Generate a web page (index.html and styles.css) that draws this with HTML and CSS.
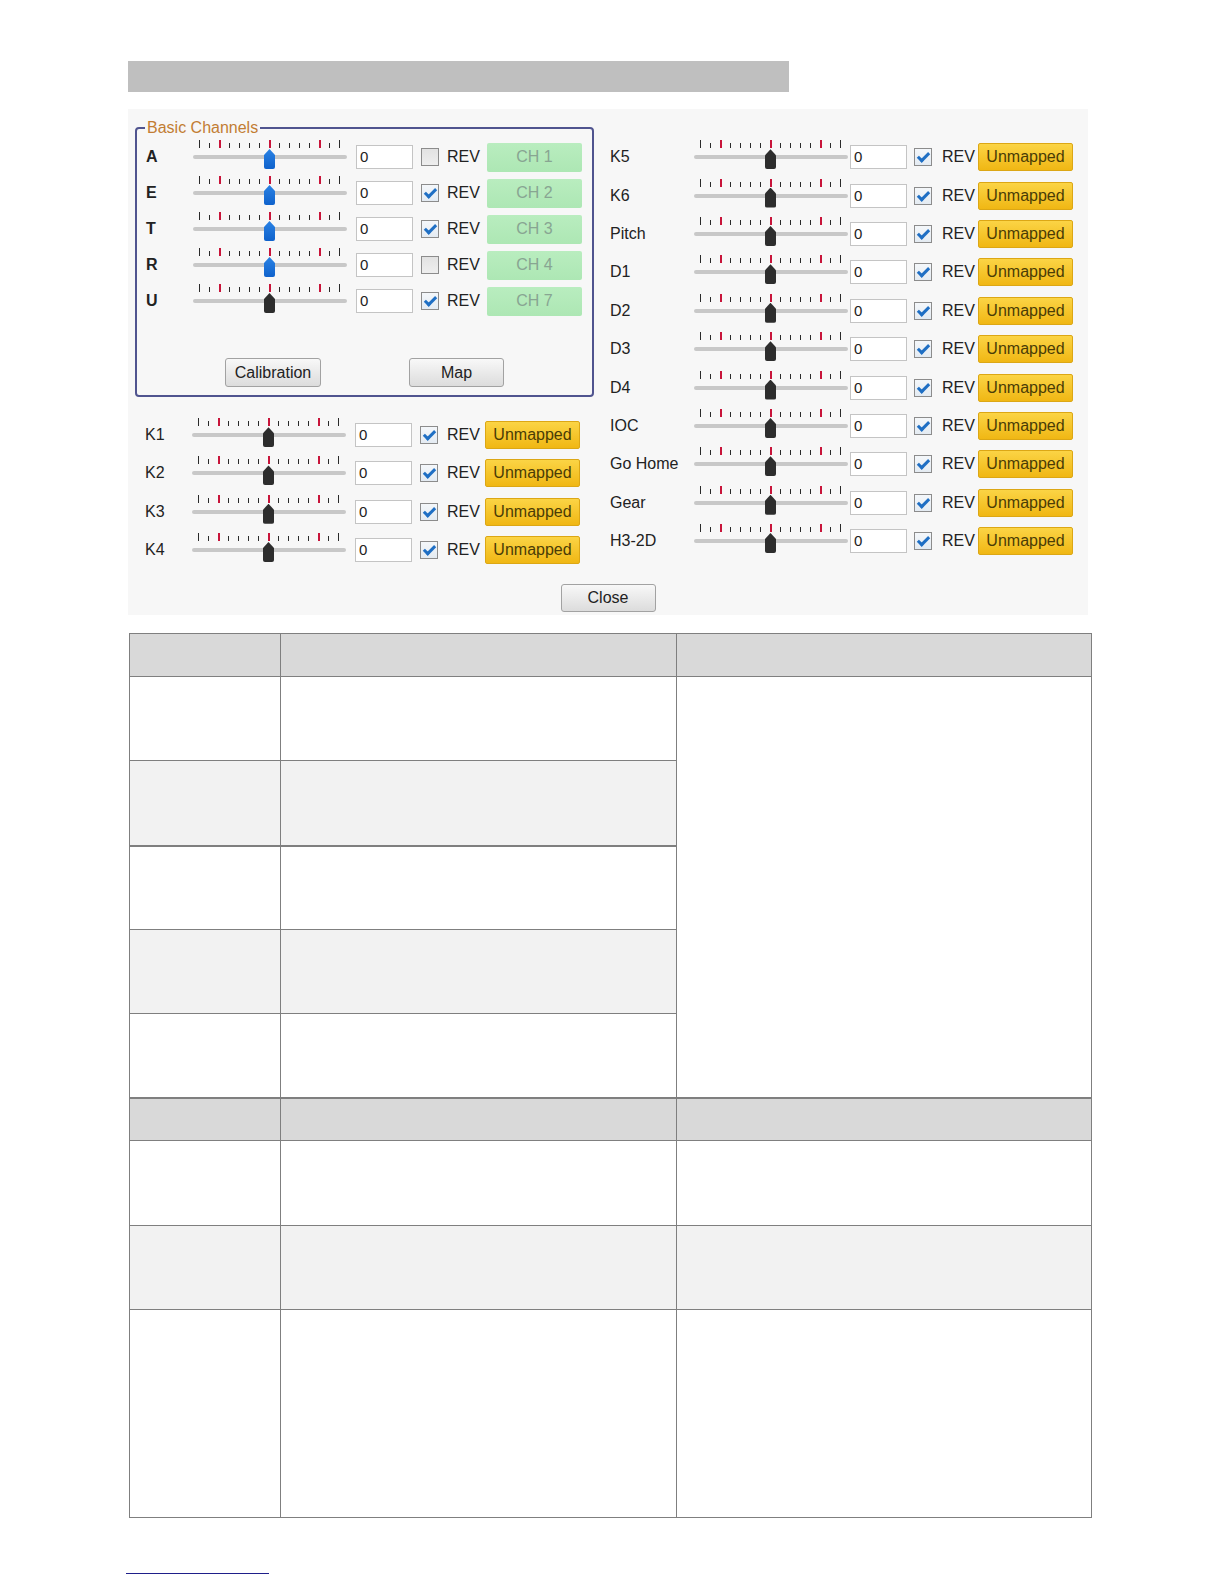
FILE: index.html
```html
<!DOCTYPE html>
<html>
<head>
<meta charset="utf-8">
<title>Channels</title>
<link rel="stylesheet" href="styles.css">
</head>
<body>
<div class="page">
  <div class="titlebar"></div>
  <div class="panel">
    <div class="cols">
      <div class="lcol">
        <fieldset class="grp">
          <legend>Basic Channels</legend>
          <div class="row g"><span class="lbl bold">A</span><div class="sl blue"><i></i></div><span class="num">0</span><span class="cb"></span><span class="rev">REV</span><span class="ch">CH 1</span></div>
          <div class="row g"><span class="lbl bold">E</span><div class="sl blue"><i></i></div><span class="num">0</span><span class="cb on"></span><span class="rev">REV</span><span class="ch">CH 2</span></div>
          <div class="row g"><span class="lbl bold">T</span><div class="sl blue"><i></i></div><span class="num">0</span><span class="cb on"></span><span class="rev">REV</span><span class="ch">CH 3</span></div>
          <div class="row g"><span class="lbl bold">R</span><div class="sl blue"><i></i></div><span class="num">0</span><span class="cb"></span><span class="rev">REV</span><span class="ch">CH 4</span></div>
          <div class="row g"><span class="lbl bold">U</span><div class="sl"><i></i></div><span class="num">0</span><span class="cb on"></span><span class="rev">REV</span><span class="ch">CH 7</span></div>
          <div class="grpbtns"><span class="btn cal">Calibration</span><span class="btn">Map</span></div>
        </fieldset>
        <div class="krows">
          <div class="row k"><span class="lbl">K1</span><div class="sl"><i></i></div><span class="num">0</span><span class="cb on"></span><span class="rev">REV</span><span class="um">Unmapped</span></div>
          <div class="row k"><span class="lbl">K2</span><div class="sl"><i></i></div><span class="num">0</span><span class="cb on"></span><span class="rev">REV</span><span class="um">Unmapped</span></div>
          <div class="row k"><span class="lbl">K3</span><div class="sl"><i></i></div><span class="num">0</span><span class="cb on"></span><span class="rev">REV</span><span class="um">Unmapped</span></div>
          <div class="row k"><span class="lbl">K4</span><div class="sl"><i></i></div><span class="num">0</span><span class="cb on"></span><span class="rev">REV</span><span class="um">Unmapped</span></div>
        </div>
      </div>
      <div class="rcol">
        <div class="row r"><span class="lbl">K5</span><div class="sl"><i></i></div><span class="num">0</span><span class="cb on"></span><span class="rev">REV</span><span class="um">Unmapped</span></div>
        <div class="row r"><span class="lbl">K6</span><div class="sl"><i></i></div><span class="num">0</span><span class="cb on"></span><span class="rev">REV</span><span class="um">Unmapped</span></div>
        <div class="row r"><span class="lbl">Pitch</span><div class="sl"><i></i></div><span class="num">0</span><span class="cb on"></span><span class="rev">REV</span><span class="um">Unmapped</span></div>
        <div class="row r"><span class="lbl">D1</span><div class="sl"><i></i></div><span class="num">0</span><span class="cb on"></span><span class="rev">REV</span><span class="um">Unmapped</span></div>
        <div class="row r"><span class="lbl">D2</span><div class="sl"><i></i></div><span class="num">0</span><span class="cb on"></span><span class="rev">REV</span><span class="um">Unmapped</span></div>
        <div class="row r"><span class="lbl">D3</span><div class="sl"><i></i></div><span class="num">0</span><span class="cb on"></span><span class="rev">REV</span><span class="um">Unmapped</span></div>
        <div class="row r"><span class="lbl">D4</span><div class="sl"><i></i></div><span class="num">0</span><span class="cb on"></span><span class="rev">REV</span><span class="um">Unmapped</span></div>
        <div class="row r"><span class="lbl">IOC</span><div class="sl"><i></i></div><span class="num">0</span><span class="cb on"></span><span class="rev">REV</span><span class="um">Unmapped</span></div>
        <div class="row r"><span class="lbl">Go Home</span><div class="sl"><i></i></div><span class="num">0</span><span class="cb on"></span><span class="rev">REV</span><span class="um">Unmapped</span></div>
        <div class="row r"><span class="lbl">Gear</span><div class="sl"><i></i></div><span class="num">0</span><span class="cb on"></span><span class="rev">REV</span><span class="um">Unmapped</span></div>
        <div class="row r"><span class="lbl">H3-2D</span><div class="sl"><i></i></div><span class="num">0</span><span class="cb on"></span><span class="rev">REV</span><span class="um">Unmapped</span></div>
      </div>
    </div>
    <div class="closebar"><span class="btn close">Close</span></div>
  </div>

  <table class="grid">
    <colgroup><col class="c1"><col class="c2"><col class="c3"></colgroup>
    <tr class="hd"><td></td><td></td><td></td></tr>
    <tr class="r83"><td></td><td></td><td rowspan="5" class="merged"></td></tr>
    <tr class="r84 alt"><td></td><td></td></tr>
    <tr class="r82 thick"><td></td><td></td></tr>
    <tr class="r83 alt"><td></td><td></td></tr>
    <tr class="r83"><td></td><td></td></tr>
    <tr class="hd2 thick"><td></td><td></td><td></td></tr>
    <tr class="r84"><td></td><td></td><td></td></tr>
    <tr class="r83 alt"><td></td><td></td><td></td></tr>
    <tr class="r207"><td></td><td></td><td></td></tr>
  </table>

  <div class="footline"></div>
</div>
</body>
</html>
```

FILE: styles.css
```css
html, body {
  margin: 0;
  padding: 0;
  background: #ffffff;
}

body {
  font-family: "Liberation Sans", Arial, sans-serif;
  color: #222;
}

.page {
  padding-top: 61px;
  padding-bottom: 4px;
}

.titlebar {
  margin-left: 128px;
  width: 661px;
  height: 31px;
  background: #bfbfbf;
}

/* ---------- dialog panel ---------- */
.panel {
  margin: 17px 0 0 128px;
  width: 960px;
  box-sizing: border-box;
  padding: 10px 0 3px 0;
  background: #f7f7f7;
}

.cols {
  display: grid;
  grid-template-columns: 459px 1fr;
  margin-left: 7px;
  align-items: start;
}

.grp {
  margin: 0;
  padding: 2px 0 8px 0;
  width: 459px;
  box-sizing: border-box;
  min-inline-size: 0;
  border: 2px solid #50548f;
  border-radius: 4px;
}

.grp legend {
  margin-left: 8px;
  padding: 0 2px;
  font-size: 16px;
  line-height: 18px;
  color: #c27d33;
}

.row {
  display: flex;
  align-items: center;
  font-size: 16px;
}

.row.g { height: 36px; padding-left: 9px; }
.row.k { height: 38.3px; padding-left: 10px; }
.row.r { height: 38.4px; padding-left: 16px; }

.lbl {
  width: 47px;
  flex: none;
  white-space: nowrap;
}
.lbl.bold { font-weight: bold; }
.row.r .lbl { width: 84px; }

/* slider */
.sl {
  position: relative;
  width: 154px;
  height: 34px;
  flex: none;
}
.sl::before {
  content: "";
  position: absolute;
  left: 6px;
  top: 0;
  width: 141px;
  height: 8px;
  background:
    linear-gradient(#c8143a, #c8143a) 20px 0 / 2px 8px no-repeat,
    linear-gradient(#c8143a, #c8143a) 70px 0 / 2px 8px no-repeat,
    linear-gradient(#c8143a, #c8143a) 120px 0 / 2px 8px no-repeat,
    linear-gradient(#2a2a2a, #2a2a2a) 0 0 / 1px 8px no-repeat,
    linear-gradient(#2a2a2a, #2a2a2a) 140px 0 / 1px 8px no-repeat,
    repeating-linear-gradient(to right, #2a2a2a 0 1px, transparent 1px 10px) 0 100% / 141px 5px no-repeat;
}
.sl::after {
  content: "";
  position: absolute;
  left: 0;
  top: 15px;
  width: 154px;
  height: 4px;
  border-radius: 2px;
  background: #c8c8c8;
}
.sl i {
  position: absolute;
  z-index: 1;
  left: 71px;
  top: 9px;
  width: 11px;
  height: 20px;
  background: #2d2d2d;
  clip-path: polygon(50% 0, 100% 30%, 100% 100%, 0 100%, 0 30%);
  border-radius: 0 0 2px 2px;
}
.sl.blue i {
  background: linear-gradient(#2a82e4, #0f62cc);
}

/* number box */
.num {
  flex: none;
  width: 57px;
  height: 24px;
  box-sizing: border-box;
  border: 1px solid #c4c4c4;
  background: #fff;
  font-size: 15px;
  line-height: 22px;
  padding-left: 3px;
  margin-left: 9px;
}
.row.k .num { margin-left: 9px; }
.row.r .num { margin-left: 2px; }

/* checkbox */
.cb {
  position: relative;
  flex: none;
  width: 18px;
  height: 18px;
  box-sizing: border-box;
  border: 1px solid #8c8c8c;
  background: linear-gradient(#e2e2e2, #eeeeee);
  margin-left: 8px;
}
.row.r .cb { margin-left: 7px; }
.cb.on {
  background: linear-gradient(#f4f7fa, #e4ebf2);
}
.cb.on::after {
  content: "";
  position: absolute;
  left: 5px;
  top: 1px;
  width: 4px;
  height: 9px;
  border: solid #1f6fc4;
  border-width: 0 3px 3px 0;
  transform: rotate(45deg);
}

.rev {
  flex: none;
  width: 40px;
  margin-left: 8px;
  white-space: nowrap;
}
.row.k .rev { margin-left: 9px; width: 38px; }
.row.r .rev { margin-left: 10px; width: 36px; }

/* channel buttons */
.ch {
  flex: none;
  width: 95px;
  height: 29px;
  display: flex;
  align-items: center;
  justify-content: center;
  background: linear-gradient(#b9edbf, #ade7b4);
  color: #88a592;
  border-radius: 2px;
}

.um {
  flex: none;
  width: 95px;
  height: 28px;
  box-sizing: border-box;
  display: flex;
  align-items: center;
  justify-content: center;
  background: linear-gradient(#fbd445, #f0b714);
  border: 1px solid #dca715;
  border-radius: 2px;
  color: #4a3c06;
}

.grpbtns {
  display: flex;
  justify-content: space-evenly;
  margin-top: 39px;
}

.btn {
  display: inline-flex;
  align-items: center;
  justify-content: center;
  width: 95px;
  height: 29px;
  box-sizing: border-box;
  border: 1px solid #a2a2a2;
  border-radius: 3px;
  background: linear-gradient(#f8f8f8, #dcdcdc);
  font-size: 16px;
  color: #222;
}
.btn.cal { width: 96px; }
.btn.close { height: 28px; }

.krows { margin-top: 19px; }

.rcol { padding-top: 19px; }

.closebar {
  display: flex;
  justify-content: center;
  margin-top: 15px;
}

/* ---------- table ---------- */
.grid {
  margin: 18px 0 0 129px;
  width: 962px;
  border-collapse: collapse;
  table-layout: fixed;
}
.grid col.c1 { width: 151px; }
.grid col.c2 { width: 396px; }
.grid col.c3 { width: 415px; }
.grid td {
  border: 1px solid #7f7f7f;
  padding: 0;
  background: #ffffff;
}
.grid tr.hd td { background: #d9d9d9; height: 42px; }
.grid tr.hd2 td { background: #d9d9d9; height: 41px; }
.grid tr.alt td { background: #f2f2f2; }
.grid td.merged { background: #ffffff; }
.grid tr.thick td { border-top: 2px solid #7f7f7f; }
.grid tr.r82 td { height: 82px; }
.grid tr.r83 td { height: 83px; }
.grid tr.r84 td { height: 84px; }
.grid tr.r207 td { height: 207px; }

.footline {
  margin: 55px 0 0 126px;
  width: 143px;
  height: 1px;
  background: #1f1f8a;
}
```
